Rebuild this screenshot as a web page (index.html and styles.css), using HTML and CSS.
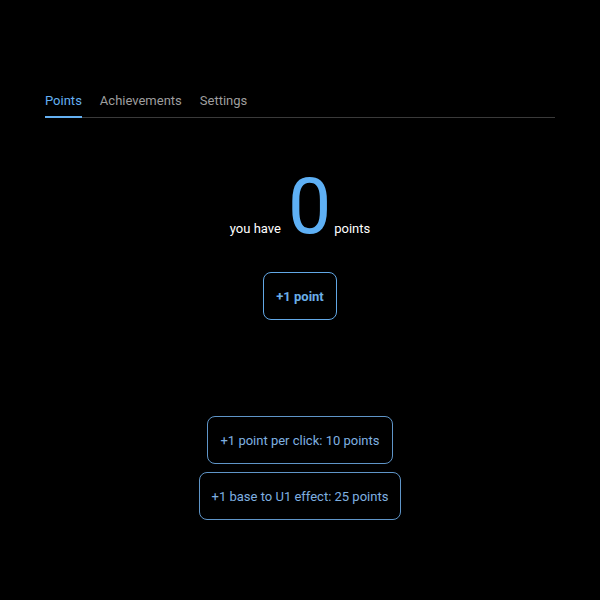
FILE: index.html
```html
<!DOCTYPE html>
<html lang="en">
<head>
<meta charset="utf-8">
<title>Points</title>
<link rel="stylesheet" href="styles.css">
</head>
<body>
<div class="app">
  <nav class="tabs">
    <div class="tab active">Points</div>
    <div class="tab">Achievements</div>
    <div class="tab">Settings</div>
  </nav>
  <section class="score">
    <span class="label label-before">you have</span>
    <span class="big">0</span>
    <span class="label label-after">points</span>
  </section>
  <div class="main-action">
    <button class="btn btn-primary">+1 point</button>
  </div>
  <div class="upgrades">
    <button class="btn btn-upgrade">+1 point per click: 10 points</button>
    <button class="btn btn-upgrade">+1 base to U1 effect: 25 points</button>
  </div>
</div>
</body>
</html>
```
FILE: styles.css
```css
html, body {
  margin: 0;
  padding: 0;
  background: #000;
  color: #fff;
  font-family: Roboto, "Liberation Sans", sans-serif;
}
.app {
  width: 510px;
  margin: 0 auto;
  padding-top: 85px;
}
.tabs {
  display: flex;
  gap: 18px;
  border-bottom: 1px solid #3a3a3a;
}
.tab {
  font-size: 13px;
  line-height: 16px;
  padding: 8px 0 7px;
  color: #9e9e9e;
  border-bottom: 2px solid transparent;
  margin-bottom: -1px;
}
.tab.active {
  color: #64b0f2;
  border-bottom-color: #64b0f2;
}
.score {
  display: flex;
  justify-content: center;
  align-items: baseline;
  margin-top: 44px;
  height: 90px;
}
.label {
  font-size: 13px;
}
.label-before {
  margin-right: 7px;
}
.label-after {
  margin-left: 3px;
}
.big {
  font-size: 77px;
  line-height: 90px;
  color: #5eb0f5;
}
.main-action {
  display: flex;
  justify-content: center;
  margin-top: 20px;
}
.btn {
  font-family: Roboto, "Liberation Sans", sans-serif;
  font-size: 13px;
  height: 48px;
  padding: 0 12px;
  background: #000;
  border-radius: 8px;
  cursor: pointer;
}
.btn-primary {
  font-weight: 700;
  color: #6aaee8;
  border: 1px solid #62a8e6;
}
.upgrades {
  display: flex;
  flex-direction: column;
  align-items: center;
  gap: 8px;
  margin-top: 96px;
}
.btn-upgrade {
  font-weight: 400;
  color: #7fb0e0;
  border: 1px solid #5f95c8;
}
```
